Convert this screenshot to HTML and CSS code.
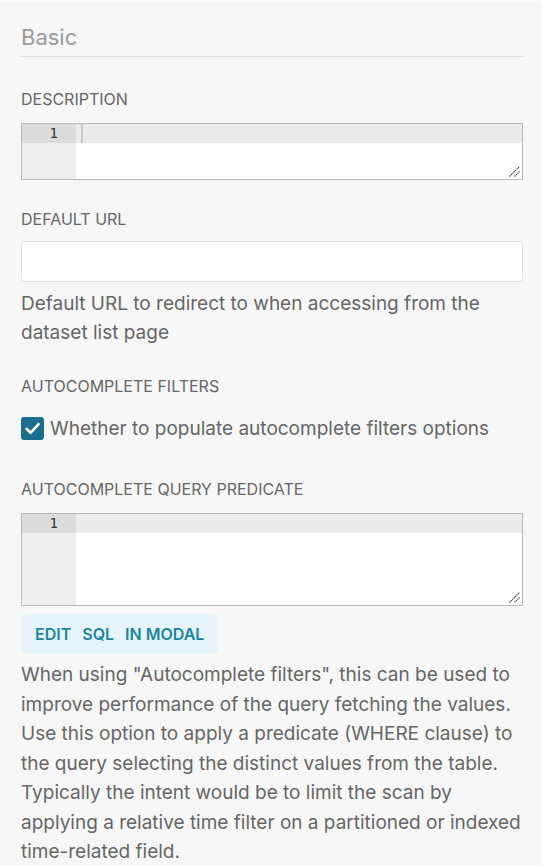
FILE: index.html
```html
<!DOCTYPE html>
<html lang="en">
<head>
<meta charset="utf-8">
<title>Basic</title>
<link rel="stylesheet" href="styles.css">
</head>
<body>
<div class="panel">
  <div class="section-title">Basic</div>

  <div class="field field-first">
    <div class="label label-editor">Description</div>
    <div class="editor editor-sm">
      <div class="gutter"><div class="gutter-cell">1</div></div>
      <div class="content"><div class="active-line"><span class="cursor"></span></div></div>
      <svg class="grip" width="11" height="11" viewBox="0 0 11 11"><path d="M0.5 10.5 L10.5 0.5 M5.5 10.5 L10.5 5.5" stroke="#4d4d4d" stroke-width="1.2" stroke-dasharray="1.4 0.6" fill="none"/></svg>
    </div>
  </div>

  <div class="field">
    <div class="label label-input">Default URL</div>
    <div class="text-input"></div>
    <p class="help help-short">Default URL to redirect to when accessing from the dataset list page</p>
  </div>

  <div class="field field-check">
    <div class="label">Autocomplete filters</div>
    <label class="check-row">
      <span class="checkbox"><svg width="23" height="23" viewBox="0 0 23 23"><path d="M5.5 11.8 L9.6 15.8 L17.6 7.2" stroke="#fff" stroke-width="2.6" fill="none" stroke-linecap="round" stroke-linejoin="round"/></svg></span>
      <span class="check-text">Whether to populate autocomplete filters options</span>
    </label>
  </div>

  <div class="field field-predicate">
    <div class="label label-editor">Autocomplete query predicate</div>
    <div class="editor editor-lg">
      <div class="gutter"><div class="gutter-cell">1</div></div>
      <div class="content"><div class="active-line"></div></div>
      <svg class="grip" width="11" height="11" viewBox="0 0 11 11"><path d="M0.5 10.5 L10.5 0.5 M5.5 10.5 L10.5 5.5" stroke="#4d4d4d" stroke-width="1.2" stroke-dasharray="1.4 0.6" fill="none"/></svg>
    </div>
    <button class="sql-button" type="button"><span>Edit</span><span>SQL</span><span>in modal</span></button>
    <p class="help help-long">When using "Autocomplete filters", this can be used to improve performance of the query fetching the values. Use this option to apply a predicate (WHERE clause) to the query selecting the distinct values from the table. Typically the intent would be to limit the scan by applying a relative time filter on a partitioned or indexed time-related field.</p>
  </div>
</div>
</body>
</html>
```

FILE: styles.css
```css
html, body {
  margin: 0;
  padding: 0;
  background: #f7f7f7;
}

body {
  font-family: Inter, "Noto Sans", sans-serif;
  color: #666666;
  border-top: 2px solid #fbfbfb;
}

.panel {
  padding: 0 19px 0 21px;
}

.section-title {
  font-size: 22px;
  line-height: 28px;
  color: #9b9b9b;
  padding-top: 21px;
  padding-bottom: 5px;
  border-bottom: 1px solid #e0e0e0;
}

.field {
  margin-top: 29px;
}

.field-first {
  margin-top: 32px;
}

.field-check {
  margin-top: 29px;
}

.field-predicate {
  margin-top: 36px;
}

.label {
  font-size: 16px;
  line-height: 20px;
  text-transform: uppercase;
  color: #666666;
}

.label-editor {
  margin-bottom: 14px;
}

.label-input {
  margin-bottom: 12px;
}

.editor {
  position: relative;
  display: grid;
  grid-template-columns: 54px 1fr;
  border: 1px solid #b9b9b9;
  background: #ffffff;
  box-sizing: border-box;
}

.editor-sm {
  height: 57px;
}

.editor-lg {
  height: 93px;
}

.gutter {
  background: #efefef;
}

.gutter-cell {
  height: 19px;
  line-height: 19px;
  background: #dcdcdc;
  text-align: right;
  padding-right: 18px;
  font-family: "DejaVu Sans Mono", "Liberation Mono", monospace;
  font-size: 14px;
  color: #333333;
}

.active-line {
  height: 19px;
  background: #ebebeb;
}

.cursor {
  display: block;
  margin-left: 5px;
  width: 2px;
  height: 19px;
  background: #c9c9c9;
}

.grip {
  position: absolute;
  right: 2px;
  bottom: 2px;
}

.text-input {
  height: 41px;
  box-sizing: border-box;
  border: 1px solid #e0e0e4;
  border-radius: 4px;
  background: #ffffff;
}

.help {
  margin: 7px 0 0;
  font-size: 19px;
  line-height: 29px;
  color: #666666;
}

.help-long {
  margin-top: 6px;
  line-height: 29.5px;
}

.check-row {
  display: flex;
  align-items: center;
  gap: 6px;
  margin-top: 18px;
  height: 29px;
}

.checkbox {
  display: flex;
  width: 23px;
  height: 23px;
  border-radius: 3px;
  background: #1c6e8f;
}

.check-text {
  font-size: 19px;
  line-height: 29px;
  color: #666666;
}

.sql-button {
  display: inline-flex;
  align-items: center;
  gap: 11px;
  margin-top: 8px;
  height: 40px;
  padding: 0 14px;
  border: none;
  border-radius: 4px;
  background: #e6f4f9;
  color: #1a85a0;
  font-family: Inter, "Noto Sans", sans-serif;
  font-size: 16px;
  font-weight: 600;
  text-transform: uppercase;
}
```
